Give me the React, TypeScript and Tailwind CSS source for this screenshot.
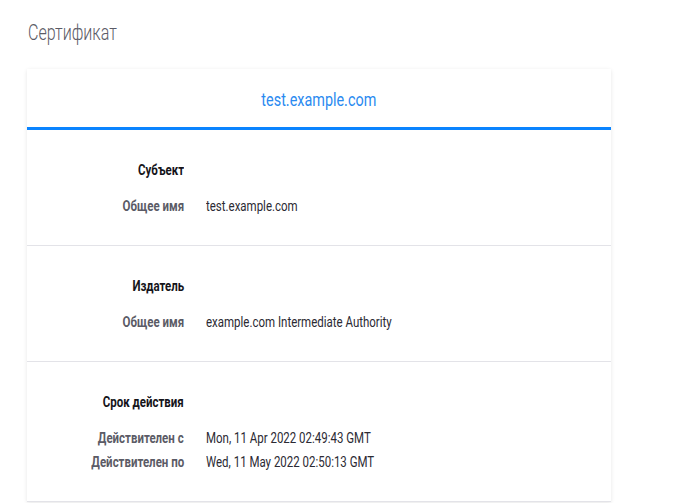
import React from 'react';

interface Row {
    label: string;
    value: string;
}

interface Section {
    title: string;
    rows: Row[];
}

const sections: Section[] = [
    { title: 'Субъект', rows: [{ label: 'Общее имя', value: 'test.example.com' }] },
    { title: 'Издатель', rows: [{ label: 'Общее имя', value: 'example.com Intermediate Authority' }] },
    {
        title: 'Срок действия',
        rows: [
            { label: 'Действителен с', value: 'Mon, 11 Apr 2022 02:49:43 GMT' },
            { label: 'Действителен по', value: 'Wed, 11 May 2022 02:50:13 GMT' },
        ],
    },
];

const font = "font-['Roboto','Noto_Sans',sans-serif]";

// the original face is a narrow one, so text is squeezed a bit horizontally
const Label: React.FC<{ children: React.ReactNode; dark?: boolean }> = ({ children, dark }) => (
    <div className="text-right">
        <span className={`inline-block origin-right scale-x-[0.82] whitespace-nowrap font-bold ${dark ? 'text-[#15141a]' : 'text-[#5b5b66]'}`}>
            {children}
        </span>
    </div>
);

const CertSection: React.FC<{ section: Section }> = ({ section }) => (
    <div className="border-b border-[#e3e3e8] pt-[30px] pb-[29px] text-[14px] leading-[20px]">
        <div className="grid grid-cols-[157px_1fr] gap-x-[22px]">
            <Label dark>{section.title}</Label>
            <div />
        </div>
        <div className="mt-[16px] flex flex-col gap-[4px]">
            {section.rows.map(row => (
                <div key={row.label} className="grid grid-cols-[157px_1fr] gap-x-[22px]">
                    <Label>{row.label}</Label>
                    <div>
                        <span className="inline-block origin-left scale-x-[0.82] whitespace-nowrap text-[#2b2a33]">{row.value}</span>
                    </div>
                </div>
            ))}
        </div>
    </div>
);

export default function App() {
    return (
        <div className={`min-h-screen bg-white px-[27px] pt-[18px] ${font}`}>
            <h1 className="pl-[1px] text-[22px] font-light leading-[30px] text-[#5b5b66]">
                <span className="inline-block origin-left scale-x-[0.73]">Сертификат</span>
            </h1>
            <div className="mt-[21px] w-[584px] bg-white shadow-[0_1px_4px_rgba(12,12,13,0.1)]">
                <div className="flex h-[61px] items-center justify-center border-b-[3px] border-[#0a84ff] pt-[2px]">
                    <span className="inline-block scale-x-[0.8] text-[18px] text-[#2a8af0]">test.example.com</span>
                </div>
                {sections.map(section => (
                    <CertSection key={section.title} section={section} />
                ))}
            </div>
        </div>
    );
}
